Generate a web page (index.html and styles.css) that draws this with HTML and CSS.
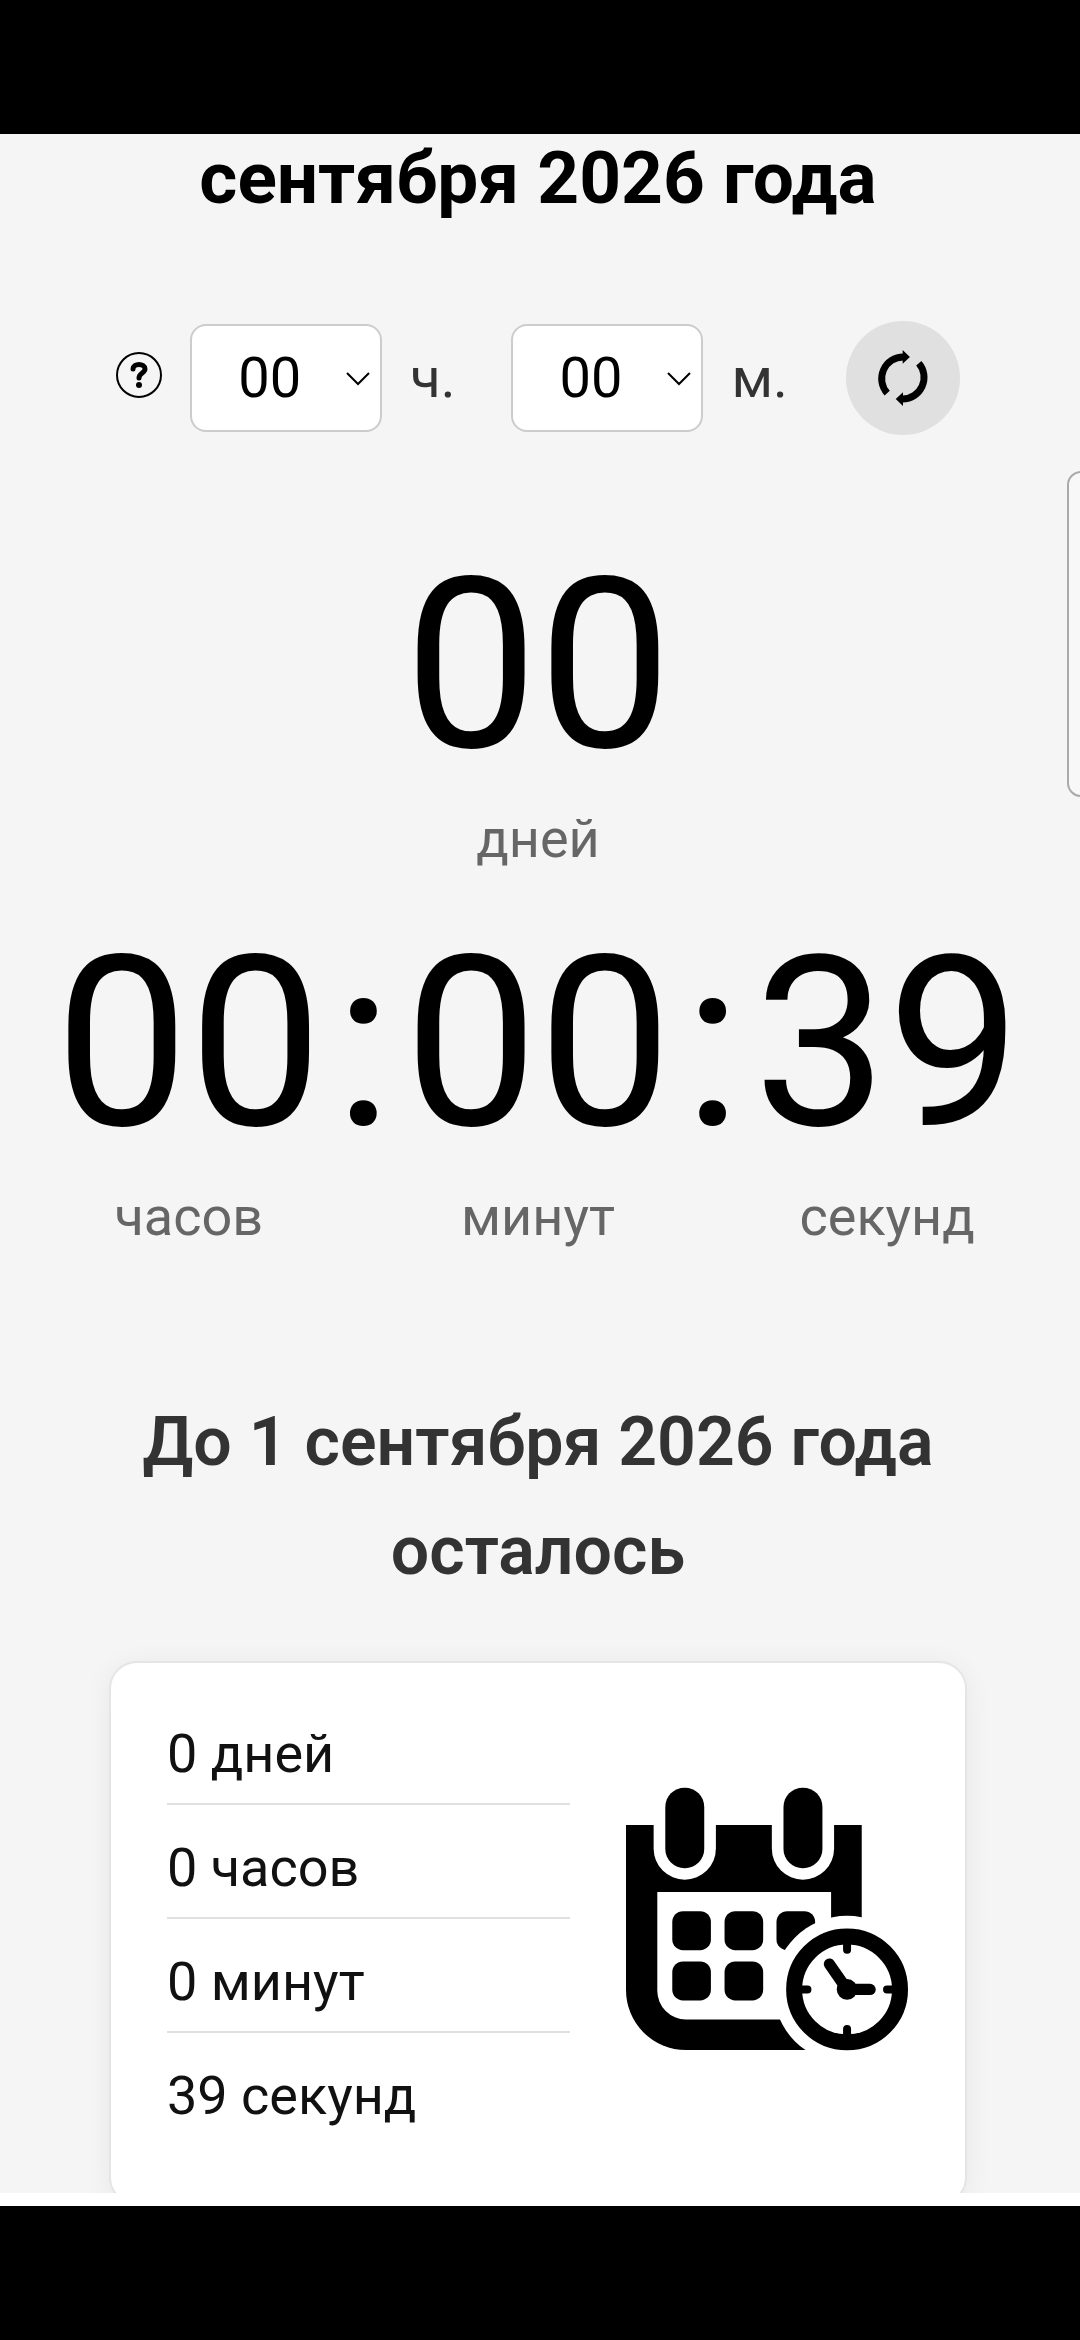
FILE: index.html
```
<!DOCTYPE html>
<html lang="ru">

<head>
    <meta charset="UTF-8">
    <meta name="viewport" content="width=device-width, initial-scale=1.0">
    <title>Сколько осталось до 1 сентября 2026 года</title>
    <link rel="stylesheet" href="styles.css">
</head>

<body>
    <main>
        <h1>сентября 2026 года</h1>

        <form class="time-form">
            <button type="button" class="help" aria-label="Помощь">
                <svg viewBox="0 0 46 46">
                    <circle cx="23" cy="23" r="22" fill="none" stroke="#000" stroke-width="2" />
                    <path d="M17 17c0-6 12-6 12 0 0 4-6 4-6 9" fill="none" stroke="#000" stroke-width="5" stroke-linecap="round" />
                    <circle cx="23" cy="33" r="3" />
                </svg>
            </button>

            <span class="select-box">
                <select id="hours">
                    <option>00</option>
                </select>
                <svg class="arrow" viewBox="0 0 24 14"><path d="M1 1l11 11L23 1" /></svg>
            </span>
            <label for="hours">ч.</label>

            <span class="select-box minutes">
                <select id="minutes">
                    <option>00</option>
                </select>
                <svg class="arrow" viewBox="0 0 24 14"><path d="M1 1l11 11L23 1" /></svg>
            </span>
            <label for="minutes">м.</label>

            <button type="button" class="refresh" aria-label="Обновить">
                <svg viewBox="0 0 170 170">
                    <path d="M37 131A66 66 0 0 1 86 21M133 40A66 66 0 0 1 84 149" fill="none" stroke="#000" stroke-width="21" />
                    <path d="M84 0l22 21-22 21zM85 128l-22 21 22 21z" />
                </svg>
            </button>
        </form>

        <section class="timer">
            <div class="unit">
                <div class="digits">00</div>
                <p>дней</p>
            </div>
            <div class="clock">
                <div class="unit">
                    <div class="digits">00</div>
                    <p>часов</p>
                </div>
                <div class="digits colon">:</div>
                <div class="unit">
                    <div class="digits">00</div>
                    <p>минут</p>
                </div>
                <div class="digits colon">:</div>
                <div class="unit">
                    <div class="digits">39</div>
                    <p>секунд</p>
                </div>
            </div>
        </section>

        <h2>До 1 сентября 2026 года осталось</h2>

        <section class="card">
            <ul>
                <li>0 дней</li>
                <li>0 часов</li>
                <li>0 минут</li>
                <li>39 секунд</li>
            </ul>
            <svg class="calendar" viewBox="78 84 850 792">
                <path d="M78 198H786V874H258A180 180 0 0 1 78 694Z" />
                <path d="M172 399H694V782H258A86 86 0 0 1 172 696Z" fill="#fff" />
                <!-- кольца -->
                <g fill="#fff">
                    <path d="M161 190H348V269A93 93 0 0 1 161 269Z" />
                    <path d="M516 190H703V269A93 93 0 0 1 516 269Z" />
                </g>
                <rect x="196" y="86" width="117" height="242" rx="58" />
                <rect x="551" y="86" width="117" height="242" rx="58" />
                <!-- дни -->
                <rect x="217" y="457" width="116" height="117" rx="32" />
                <rect x="374" y="457" width="116" height="117" rx="32" />
                <rect x="530" y="457" width="116" height="117" rx="32" />
                <rect x="217" y="608" width="116" height="117" rx="32" />
                <rect x="374" y="608" width="116" height="117" rx="32" />
                <!-- часы -->
                <circle cx="742" cy="692" r="221" fill="#fff" />
                <circle cx="742" cy="692" r="159" fill="#fff" stroke="#000" stroke-width="48" />
                <circle cx="742" cy="692" r="31" />
                <g fill="none" stroke="#000" stroke-linecap="round">
                    <path d="M689 616L742 692" stroke-width="34" />
                    <path d="M742 692H811" stroke-width="34" />
                    <path d="M742 550V573M742 811V834M600 692H623M862 692H885" stroke-width="24" />
                </g>
            </svg>
        </section>

        <aside class="side-panel"></aside>
    </main>
</body>

</html>
```
FILE: styles.css
```
* {
    box-sizing: border-box;
}

body {
    font-family: Roboto, sans-serif;
    margin: 0;
    height: 100vh;
    background-color: white;
    border-top: 134px solid black;
    border-bottom: 134px solid black;
    padding-bottom: 13px;
}

main {
    position: relative;
    height: 100%;
    padding-right: 4px;
    overflow: hidden;
    background-color: #f5f5f5;
}

h1 {
    margin: 0;
    font-size: 73px;
    line-height: 88px;
    text-align: center;
}

.time-form {
    display: flex;
    align-items: center;
    justify-content: center;
    margin-top: 99px;
}

button {
    padding: 0;
    border: none;
    background: none;
    cursor: pointer;
}

.help {
    width: 46px;
    height: 46px;
    margin-right: 28px;
    margin-bottom: 6px;
}

.help svg {
    display: block;
}

.select-box {
    position: relative;
    margin-right: 28px;
}

.minutes {
    margin-left: 56px;
}

select {
    display: block;
    appearance: none;
    width: 192px;
    height: 108px;
    padding: 0 46px;
    border: 2px solid #ccc;
    border-radius: 16px;
    background-color: white;
    color: black;
    font-family: inherit;
    font-size: 56px;
}

.arrow {
    position: absolute;
    right: 12px;
    top: 48px;
    width: 24px;
    height: 14px;
    fill: none;
    stroke: black;
    stroke-width: 2;
    pointer-events: none;
}

label {
    font-size: 56px;
    color: #333;
}

.refresh {
    display: flex;
    align-items: center;
    justify-content: center;
    width: 114px;
    height: 114px;
    margin-left: 58px;
    border-radius: 50%;
    background-color: #e0e0e0;
}

.refresh svg {
    width: 56px;
}

.timer {
    margin-top: 91px;
    text-align: center;
}

.digits {
    font-size: 238px;
    line-height: 280px;
}

.unit p {
    margin: 0;
    padding-bottom: 32px;
    font-size: 54px;
    line-height: 66px;
    color: #666;
}

.clock {
    display: flex;
    justify-content: center;
}

.colon {
    padding: 0 12px;
}

h2 {
    margin: 106px 110px 0;
    font-size: 68px;
    font-weight: 600;
    line-height: 109px;
    text-align: center;
    color: #333;
}

.card {
    display: flex;
    align-items: center;
    gap: 56px;
    margin: 55px 109px 0;
    padding: 28px 56px 56px;
    border: 2px solid #e5e5e5;
    border-radius: 28px;
    background-color: white;
    box-shadow: 0 4px 28px rgba(0, 0, 0, 0.06);
}

ul {
    flex: 1;
    margin: 0;
    padding: 0;
    list-style-type: none;
}

li {
    height: 114px;
    padding-top: 20px;
    font-size: 54px;
    line-height: 86px;
    color: #111;
    border-bottom: 2px solid #e0e0e0;
}

li:last-child {
    border-bottom: none;
}

.calendar {
    width: 283px;
}

.side-panel {
    position: absolute;
    top: 337px;
    right: -20px;
    width: 33px;
    height: 326px;
    border: 2px solid #aaa;
    border-radius: 14px;
    background-color: #f8f8f8;
}
```
